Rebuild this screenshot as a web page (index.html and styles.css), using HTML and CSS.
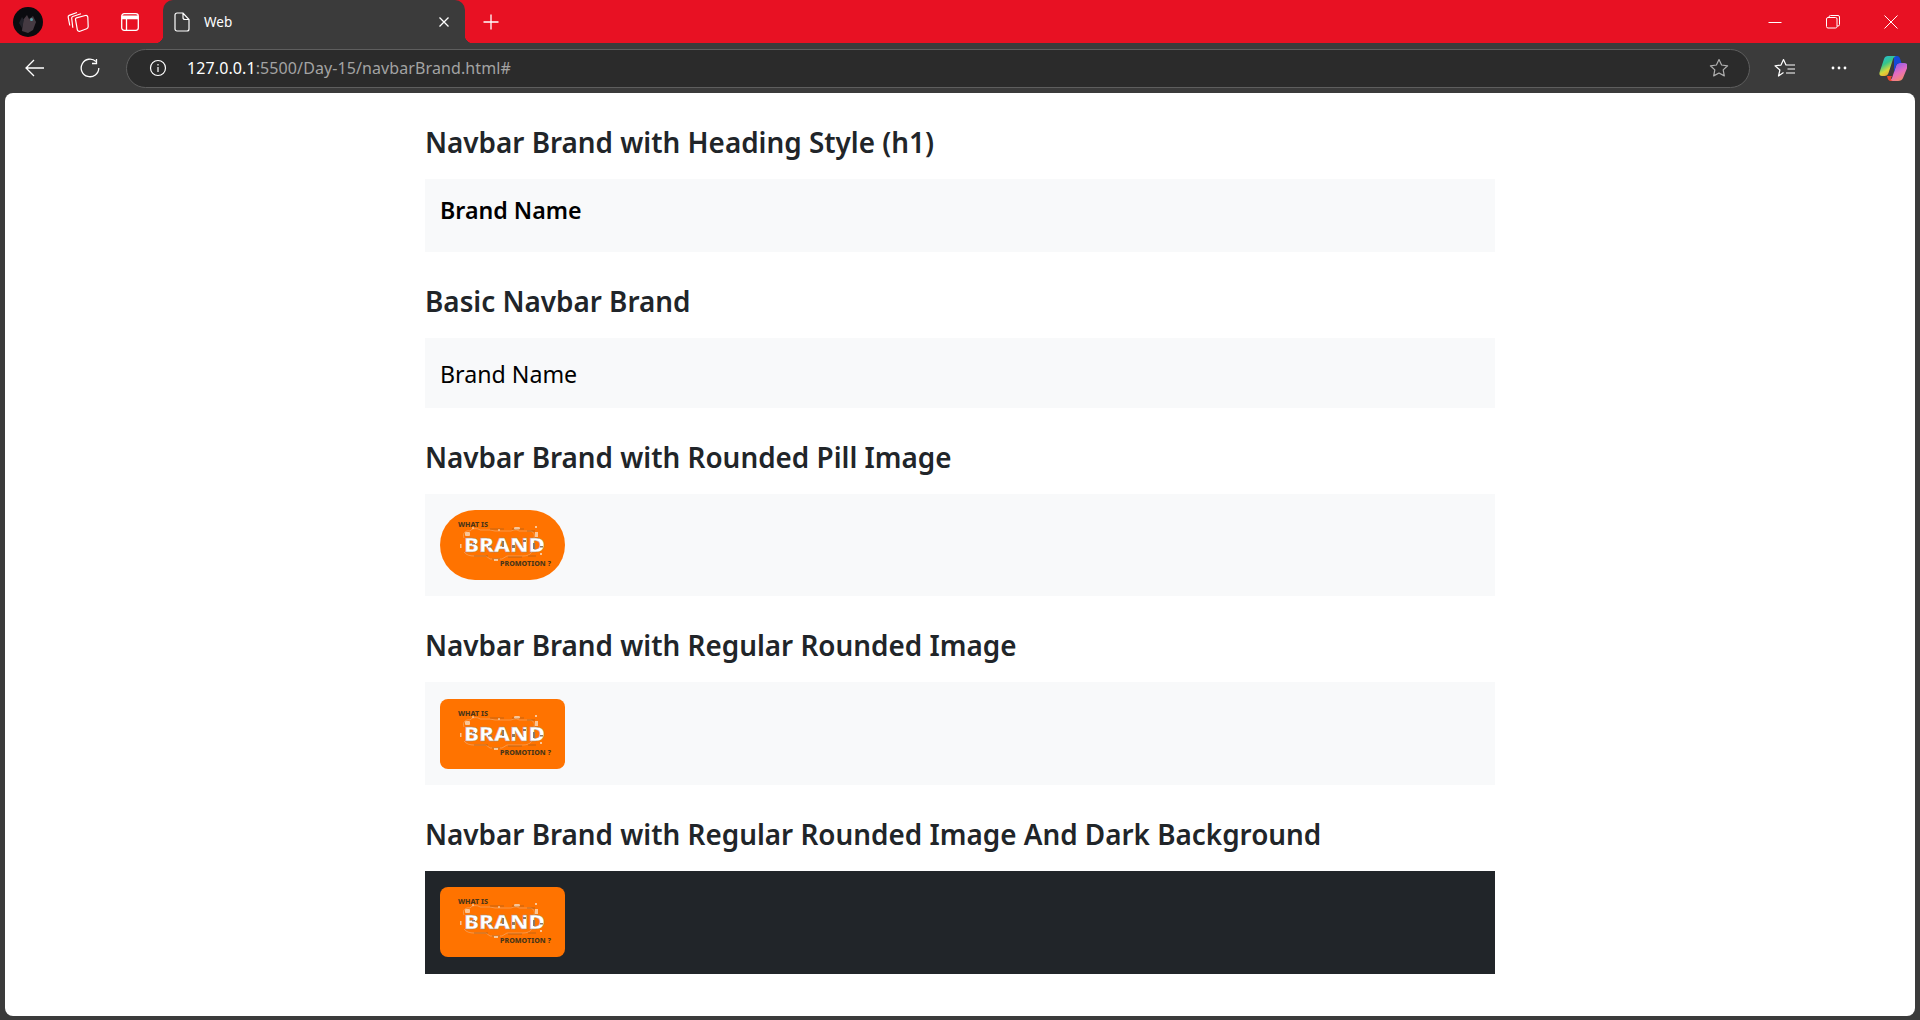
FILE: index.html
```html
<!DOCTYPE html>
<html lang="en">
<head>
<meta charset="utf-8">
<title>Web</title>
<link rel="stylesheet" href="styles.css">
</head>
<body>
<svg class="defs" width="0" height="0" aria-hidden="true">
  <defs>
    <symbol id="brand-logo" viewBox="0 0 125 70">
      <rect width="125" height="70" fill="#ff7300"/>
      <g class="logo-art">
        <g fill="none" stroke="#f0b07a" stroke-width=".6">
          <path d="M24 28c-2-5 2-8 6-7 2-3 8-3 10-1h10l5 1h16c3-1 5-2 8 0h12c3 1 4 4 3 7M24 42c2 3 6 4 10 4h12l4 3h12l5-3h14c4 0 8 0 11-4"/>
          <path d="M34 46h14M52 49h8M68 47h14M88 46h8" stroke="#9c5a20"/>
          <path d="M50 19h14M72 19h12M87 21h8" stroke="#9c5a20"/>
        </g>
        <g fill="#f7ead9" opacity=".7">
          <rect x="25" y="22" width="5" height="4" rx="1"/><rect x="74" y="17" width="6" height="2.500" rx="1.200"/>
          <rect x="95" y="22" width="3" height="5"/><rect x="95" y="16" width="2" height="2"/>
          <rect x="54" y="49" width="4" height="2"/><circle cx="33" cy="18" r="1"/><circle cx="59" cy="20" r="1"/>
          <rect x="20" y="34" width="1.500" height="4"/><rect x="100" y="43" width="2" height="2"/>
        </g>
      </g>
      <text x="18" y="17" textLength="30" lengthAdjust="spacingAndGlyphs" class="logo-small">WHAT IS</text>
      <text x="24" y="42" textLength="81" lengthAdjust="spacingAndGlyphs" class="logo-big">BRAND</text>
      <g class="logo-art" fill="#8a7a6a">
        <rect x="32" y="33" width="3" height="1.500"/><rect x="48" y="36" width="4" height="1.500"/><rect x="62" y="31" width="2" height="6"/><rect x="72" y="35" width="3" height="3"/>
        <rect x="83" y="30" width="3" height="2"/><rect x="93" y="33" width="2" height="6"/><rect x="100" y="36" width="3" height="1.500"/>
      </g>
      <text x="60" y="56" textLength="51" lengthAdjust="spacingAndGlyphs" class="logo-small">PROMOTION ?</text>
    </symbol>
  </defs>
</svg>

<header class="tabstrip">
  <span class="strip-btn">
    <svg width="30" height="30" viewBox="0 0 30 30"><circle cx="15" cy="15" r="15" fill="#0b0b0f"/><path d="M9 24l1-11 4-5 2 4 4-3 3 6-3 8-5 3z" fill="#453a42"/><path d="M6 16l3-6 2 3-2 8z" fill="#22222a"/><circle cx="18.500" cy="12.500" r="1.500" fill="#5aa0a8"/></svg>
  </span>
  <span class="strip-btn">
    <svg width="22" height="21" viewBox="0 0 22 21" fill="none" stroke="#fff" stroke-width="1.200" stroke-linejoin="round"><path d="M9.500 6.800l8.800-2.300c1.200-.3 2.200.4 2.500 1.500l.4 9.500c0 1.100-.5 1.900-1.500 2.200l-6.700 2.500c-1.300.5-2.500-.3-2.700-1.600L8.500 8.300c-.1-.7.300-1.300 1-1.500z"/><path d="M5.800 16.800L4.700 7.200c-.1-.8.300-1.400 1-1.700l8.300-2.800"/><path d="M2.800 14.500L1.200 6.200c-.2-.9.300-1.500 1-1.800L10 1.500"/></svg>
  </span>
  <span class="strip-btn strip-btn-last">
    <svg width="18" height="18" viewBox="0 0 18 18" fill="none" stroke="#fff" stroke-width="1.300"><rect x=".7" y=".7" width="16.600" height="16.600" rx="2.500"/><path d="M1 2.500h16V5H1z" fill="#fff" stroke="none"/><path d="M1 5.500h16M5.500 5.500v11.500"/></svg>
  </span>
  <div class="tab">
    <svg width="16" height="20" viewBox="0 0 16 20" fill="none" stroke="#fff" stroke-width="1.200"><path d="M3 1h6l6 6.500V17a2 2 0 0 1-2 2H3a2 2 0 0 1-2-2V3a2 2 0 0 1 2-2zM9 1v4.500a2 2 0 0 0 2 2h4"/></svg>
    <span class="tab-title">Web</span>
    <svg class="tab-close" width="12" height="12" viewBox="0 0 12 12" stroke="#fff" stroke-width="1.300"><path d="M1.500 1.500l9 9M10.500 1.500l-9 9"/></svg>
  </div>
  <span class="strip-btn new-tab">
    <svg width="18" height="18" viewBox="0 0 18 18" stroke="#fff" stroke-width="1.300"><path d="M9 1.500v15M1.500 9h15"/></svg>
  </span>
  <div class="win-controls">
    <span class="win-btn"><svg width="14" height="14" viewBox="0 0 14 14" stroke="#fff"><path d="M.5 7.500h13"/></svg></span>
    <span class="win-btn"><svg width="14" height="14" viewBox="0 0 14 14" fill="none" stroke="#fff"><rect x=".5" y="2.500" width="10.500" height="10.500" rx="1.500"/><path d="M3 2.500V2A1.500 1.500 0 0 1 4.500.5H12A1.500 1.500 0 0 1 13.500 2v7.500A1.500 1.500 0 0 1 12 11h-1"/></svg></span>
    <span class="win-btn"><svg width="14" height="14" viewBox="0 0 14 14" stroke="#fff"><path d="M.5.5l13 13M13.500.5l-13 13"/></svg></span>
  </div>
</header>

<nav class="toolbar">
  <span class="tool-btn">
    <svg width="20" height="18" viewBox="0 0 20 18" fill="none" stroke="#fff" stroke-width="1.300"><path d="M1 9h18M9 1L1 9l8 8"/></svg>
  </span>
  <span class="tool-btn">
    <svg width="20" height="20" viewBox="0 0 20 20" fill="none" stroke="#fff" stroke-width="1.300"><path d="M16 3.500A8.800 8.800 0 1 0 18.800 10"/><path d="M16.500 1v4.500H12"/></svg>
  </span>
  <div class="address">
    <svg class="addr-info" width="18" height="18" viewBox="0 0 18 18" fill="none" stroke="#fff" stroke-width="1.200"><circle cx="9" cy="9" r="7.500"/><path d="M9 8v5M9 5v1.500"/></svg>
    <span class="url"><span class="url-host">127.0.0.1</span>:5500/Day-15/navbarBrand.html#</span>
    <svg class="addr-star" width="20" height="20" viewBox="0 0 20 20" fill="none" stroke="#b0b0b0" stroke-width="1.200"><path d="M10 1.500l2.600 5.500 6 .8-4.400 4.100 1.100 6L10 15l-5.300 2.900 1.100-6L1.400 7.800l6-.8z" stroke-linejoin="round"/></svg>
  </div>
  <span class="tool-btn tool-btn-right">
    <svg width="22" height="20" viewBox="0 0 22 20" fill="none" stroke="#fff" stroke-width="1.200" stroke-linejoin="round"><path d="M9.500 14.500l-5 3.500 1.400-6L1 7.800l6-.7L9.500 1.500 12 7h9M13.500 11H21M12 15h9"/></svg>
  </span>
  <span class="tool-btn tool-btn-right">
    <svg width="16" height="4" viewBox="0 0 16 4" fill="#fff"><circle cx="2" cy="2" r="1.400"/><circle cx="8" cy="2" r="1.400"/><circle cx="14" cy="2" r="1.400"/></svg>
  </span>
  <span class="tool-btn tool-btn-right">
    <svg width="28" height="27" viewBox="0 0 28 27">
      <defs>
        <linearGradient id="cp1" x1="0" y1="0" x2=".5" y2="1"><stop offset="0" stop-color="#22b8e8"/><stop offset=".45" stop-color="#36c58a"/><stop offset=".75" stop-color="#d8d83a"/><stop offset="1" stop-color="#f0a030"/></linearGradient>
        <linearGradient id="cp2" x1=".3" y1="0" x2=".8" y2="1"><stop offset="0" stop-color="#8a5cf0"/><stop offset=".5" stop-color="#e66cc0"/><stop offset="1" stop-color="#f8905a"/></linearGradient>
      </defs>
      <path d="M19 26h-8l2-3 4-12c.6-2 2-3 4-3h4c2.500 0 4.500 1.500 3.500 4L24 23c-.7 2-2.500 3-5 3z" fill="url(#cp2)"/>
      <path d="M8 21h5l-1 2c-.5 2 .5 3 2 3h-2c-2.500 0-3.500-2-4-5z" fill="#e8452c"/>
      <path d="M15 1h3c1.500 0 2.700 1.200 3.200 3l1.300 4H21c-2 0-3.400 1-4 3l-2 6z" fill="#1449d8"/>
      <path d="M9 1h8c-1.500.5-2.500 1.500-3 3L9.500 18c-.6 2-2 3-4 3H3c-2 0-3-1.500-2.500-3.500L5 4c.6-2 2-3 4-3z" fill="url(#cp1)"/>
    </svg>
  </span>
</nav>

<main class="viewport">
  <div class="container">
    <h3 class="section-title">Navbar Brand with Heading Style (h1)</h3>
    <div class="navbar navbar-heading"><h1 class="brand-heading">Brand Name</h1></div>

    <h3 class="section-title">Basic Navbar Brand</h3>
    <div class="navbar navbar-basic"><a class="brand-link">Brand Name</a></div>

    <h3 class="section-title">Navbar Brand with Rounded Pill Image</h3>
    <div class="navbar navbar-image"><svg class="logo logo-pill" viewBox="0 0 125 70"><use href="#brand-logo"/></svg></div>

    <h3 class="section-title">Navbar Brand with Regular Rounded Image</h3>
    <div class="navbar navbar-image"><svg class="logo logo-rounded" viewBox="0 0 125 70"><use href="#brand-logo"/></svg></div>

    <h3 class="section-title">Navbar Brand with Regular Rounded Image And Dark Background</h3>
    <div class="navbar navbar-image navbar-dark"><svg class="logo logo-rounded" viewBox="0 0 125 70"><use href="#brand-logo"/></svg></div>
  </div>
</main>
</body>
</html>
```

FILE: styles.css
```css
* { box-sizing: border-box; }
html, body { height: 100%; }
body {
  margin: 0;
  display: flex;
  flex-direction: column;
  height: 1020px;
  overflow: hidden;
  background: #3b3b3b;
  font-family: "Noto Sans", "Open Sans", sans-serif;
  color: #212529;
}
svg { display: block; flex: none; }
.defs { position: absolute; }

.tabstrip {
  flex: none;
  height: 43px;
  display: flex;
  align-items: center;
  padding-left: 3px;
  background: #e81123;
}
.strip-btn {
  width: 50px;
  height: 43px;
  display: flex;
  align-items: center;
  justify-content: center;
}
.strip-btn-last { margin-left: 2px; margin-right: 8px; }
.tab {
  position: relative;
  width: 302px;
  height: 43px;
  display: flex;
  align-items: center;
  padding: 0 15px 0 11px;
  background: #3b3b3b;
  border-radius: 10px 10px 0 0;
  color: #fff;
  font-size: 13.500px;
}
.tab::before, .tab::after {
  content: "";
  position: absolute;
  bottom: 0;
  width: 8px;
  height: 8px;
}
.tab::before { left: -8px; background: radial-gradient(circle at 0 0, #e81123 8px, #3b3b3b 8.500px); }
.tab::after { right: -8px; background: radial-gradient(circle at 100% 0, #e81123 8px, #3b3b3b 8.500px); }
.tab-title { margin-left: 14px; }
.tab-close { margin-left: auto; }
.new-tab { margin-left: 1px; }
.win-controls { display: flex; margin-left: auto; }
.win-btn {
  width: 58px;
  height: 43px;
  display: flex;
  align-items: center;
  justify-content: center;
}

.toolbar {
  flex: none;
  height: 50px;
  display: flex;
  align-items: center;
  padding-left: 7px;
}
.tool-btn {
  width: 55px;
  height: 40px;
  display: flex;
  align-items: center;
  justify-content: center;
}
.tool-btn-right { width: 54px; }
.address {
  flex: 1;
  height: 39px;
  margin: 0 8px 0 9px;
  display: flex;
  align-items: center;
  padding: 0 20px 0 22px;
  background: #2b2b2b;
  border: 1px solid #5e5e5e;
  border-radius: 20px;
  color: #a3a3a3;
  font-size: 16px;
  letter-spacing: .1px;
}
.addr-info { margin-right: 20px; }
.url-host { color: #fff; }
.addr-star { margin-left: auto; }

.viewport {
  flex: 1;
  margin: 0 5px 4px;
  padding-top: 32px;
  background: #fff;
  border-radius: 8px;
  overflow: hidden;
}
.container { width: 1070px; margin: 0 auto; }
.section-title {
  margin: 32px 0 20px;
  height: 34px;
  font-size: 27.850px;
  line-height: 34px;
  font-weight: 600;
}
.section-title:first-child { margin-top: 0; }
.navbar {
  padding: 16px 15px;
  background: #f8f9fa;
}
.navbar-heading { height: 73px; }
.navbar-basic { height: 70px; }
.navbar-image { height: 102.400px; padding-top: 16.200px; }
.navbar-dark { height: 103px; background: #212529; }
.brand-heading {
  margin: -5px 0 0;
  font-size: 23.200px;
  line-height: 41px;
  font-weight: 600;
  color: #000;
}
.brand-link {
  display: block;
  margin-top: 1px;
  font-size: 23.200px;
  line-height: 38px;
  color: #000;
}
.logo { width: 125px; height: 70px; }
.logo-pill { border-radius: 35px; }
.logo-rounded { border-radius: 8px; }
.logo-art { filter: blur(.25px); }
.logo-small { font-family: "Noto Sans", sans-serif; font-size: 6.200px; font-weight: 800; fill: #4a3518; }
.logo-big { font-family: "Noto Sans", sans-serif; font-size: 20px; font-weight: 800; fill: #fff; stroke: #9a8a7c; stroke-width: .3px; }
```
